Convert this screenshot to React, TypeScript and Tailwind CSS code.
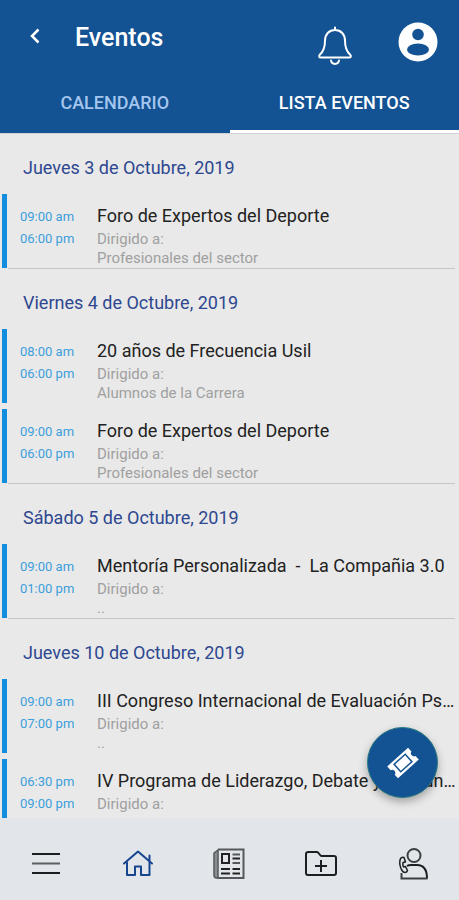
type EventItem = { start: string; end: string; title: string; audience: string };
type Day = { date: string; events: EventItem[] };

const days: Day[] = [
  {
    date: 'Jueves 3 de Octubre, 2019',
    events: [
      { start: '09:00 am', end: '06:00 pm', title: 'Foro de Expertos del Deporte', audience: 'Profesionales del sector' },
    ],
  },
  {
    date: 'Viernes 4 de Octubre, 2019',
    events: [
      { start: '08:00 am', end: '06:00 pm', title: '20 años de Frecuencia Usil', audience: 'Alumnos de la Carrera' },
      { start: '09:00 am', end: '06:00 pm', title: 'Foro de Expertos del Deporte', audience: 'Profesionales del sector' },
    ],
  },
  {
    date: 'Sábado 5 de Octubre, 2019',
    events: [
      { start: '09:00 am', end: '01:00 pm', title: 'Mentoría Personalizada  -  La Compañia 3.0', audience: '..' },
    ],
  },
  {
    date: 'Jueves 10 de Octubre, 2019',
    events: [
      { start: '09:00 am', end: '07:00 pm', title: 'III Congreso Internacional de Evaluación Psicológica', audience: '..' },
      { start: '06:30 pm', end: '09:00 pm', title: 'IV Programa de Liderazgo, Debate y Comunicación', audience: '..' },
    ],
  },
];

function BellIcon() {
  return (
    <svg width="36" height="40" viewBox="0 0 36 40" fill="none" stroke="currentColor" strokeWidth="2" strokeLinecap="round" strokeLinejoin="round">
      <path d="M18 1.500v2.500M18 4c-6 0-10 4.500-10 10.500 0 7-1.500 11-5 14-1.500 1.500-1 3 1 3h28c2 0 2.500-1.500 1-3-3.500-3-5-7-5-14C28 8.500 24 4 18 4z" />
      <path d="M14 34.500c.5 4.500 7.500 4.500 8 0" />
    </svg>
  );
}

function AccountIcon() {
  return (
    <svg width="40" height="40" viewBox="0 0 40 40">
      <circle cx="20" cy="20" r="19.500" fill="#fff" />
      <circle cx="20" cy="12.500" r="5.800" fill="#135293" />
      <ellipse cx="20" cy="27.500" rx="11" ry="6" fill="#135293" />
    </svg>
  );
}

function TicketIcon() {
  return (
    <svg width="36" height="36" viewBox="0 0 36 36">
      <g transform="rotate(-42 18 18)">
        <path d="M4 10h28v5a3.200 3.200 0 0 0 0 6.200V26H4v-4.800A3.200 3.200 0 0 0 4 15z" fill="#fff" />
        <rect x="10.500" y="13" width="15" height="10" fill="#fff" stroke="#135293" strokeWidth="1.500" />
      </g>
    </svg>
  );
}

function MenuIcon() {
  return (
    <svg width="32" height="32" viewBox="0 0 32 32" strokeWidth="2">
      <path d="M2 6h28M2 25h28" stroke="#1c1f21" />
      <path d="M2 15.500h28" stroke="#5c5f61" />
    </svg>
  );
}

function HomeIcon() {
  return (
    <svg width="32" height="32" viewBox="0 0 32 32" fill="none" stroke="#17458f" strokeWidth="2" strokeLinejoin="round" strokeLinecap="round">
      <path d="M2 15.500 16 3.500l14 12M27.500 12.500V7.500" />
      <path d="M5 14.500V27h8v-8.500h6V27h8.500V14.500" />
    </svg>
  );
}

function NewsIcon() {
  return (
    <svg width="34" height="34" viewBox="0 0 34 34" fill="none">
      <path d="M2 6l4-3v28H4.500Q2 31 2 28z" fill="#8b8e90" stroke="#55585a" strokeWidth="1.500" />
      <path d="M6 2.500h25.500v28.500H5.500" stroke="#55585a" strokeWidth="2" />
      <rect x="10" y="7" width="7" height="9" stroke="#222" strokeWidth="2" />
      <path d="M20.500 7.500H28M20.500 16H28" stroke="#55585a" strokeWidth="2" />
      <path d="M20.500 11.500H28M9 22h9M20.500 22H28M9 26.500h9M20.500 26.500H28" stroke="#222" strokeWidth="2" />
    </svg>
  );
}

function FolderIcon() {
  return (
    <svg width="34" height="34" viewBox="0 0 34 34" fill="none" stroke="#1c1f21" strokeWidth="2" strokeLinejoin="round">
      <path d="M4.500 5h8.500q1 0 1.500 1l2 2.500q.5.500 1.500.5h12q2 0 2 2v15q0 2-2 2h-26q-2 0-2-2V7q0-2 2.500-2z" />
      <path d="M17 13v12M11 19h12" />
    </svg>
  );
}

function ContactIcon() {
  return (
    <svg width="34" height="34" viewBox="0 0 34 34" fill="none" stroke="#1c1f21" strokeWidth="2">
      <circle cx="18" cy="8.500" r="6.500" stroke="#3c3f41" />
      <path d="M11 19q1.500-1 4-1h6q10 0 10 13.500" />
      <path d="M5.500 26v5.500H31.500" stroke="#3c3f41" />
      <path d="M8 10.500q-3-1-4 2.500-1 5.500 2 10.500c1.500 2.500 5 2.500 5.500 0l-2-4-2 .5q-1-2.500-.5-4.500l2.500-.5z" strokeWidth="1.500" strokeLinejoin="round" />
    </svg>
  );
}

const navItems = [
  { label: 'Menú', Icon: MenuIcon },
  { label: 'Inicio', Icon: HomeIcon },
  { label: 'Noticias', Icon: NewsIcon },
  { label: 'Carpetas', Icon: FolderIcon },
  { label: 'Contacto', Icon: ContactIcon },
];

function EventRow({ event }: { event: EventItem }) {
  return (
    <li className="flex h-[74px] border-l-[5px] border-[#138ede] pl-[13px]">
      <div className="w-[77px] shrink-0 pt-3 text-[13px] leading-[22px] text-[#3c9fdc]">
        <p>{event.start}</p>
        <p>{event.end}</p>
      </div>
      <div className="min-w-0 flex-1 pt-2 pr-0.5">
        <h3 className="overflow-hidden text-lg leading-7 text-ellipsis whitespace-pre text-[#222]">{event.title}</h3>
        <p className="text-[15px] leading-[19px] text-[#a0a0a0]">Dirigido a:</p>
        <p className="text-[15px] leading-[18px] text-[#a0a0a0]">{event.audience}</p>
      </div>
    </li>
  );
}

export default function App() {
  return (
    <div className="relative flex h-screen flex-col bg-[#e9e9e9] font-[Roboto,sans-serif]">
      <header className="shrink-0 bg-[#135293] text-white">
        <div className="flex h-[76px] items-start pr-[21px] pl-[23px]">
          <button aria-label="Volver" className="mt-6 flex h-6 w-6 items-center justify-center">
            <svg width="12" height="18" viewBox="0 0 12 18" fill="none" stroke="currentColor" strokeWidth="2.500">
              <path d="M9.500 2.500 3 9l6.500 6.500" />
            </svg>
          </button>
          <h1 className="mt-5 ml-7 flex-1 text-[25px] leading-9 font-medium">Eventos</h1>
          <button aria-label="Notificaciones" className="mt-[26px]"><BellIcon /></button>
          <button aria-label="Cuenta" className="mt-[22px] ml-[45px]"><AccountIcon /></button>
        </div>
        <div role="tablist" className="grid h-[57px] grid-cols-2 text-lg font-medium">
          <button role="tab" aria-selected="false" className="border-b-[3px] border-[#135293] text-[#a4c6ee]">CALENDARIO</button>
          <button role="tab" aria-selected="true" className="border-b-[3px] border-white">LISTA EVENTOS</button>
        </div>
      </header>

      <main className="min-h-0 flex-1 overflow-y-auto border-t border-[#cfd2d6] [scrollbar-width:none]">
        {days.map((day) => (
          <section key={day.date}>
            <h2 className="flex h-[60px] items-center pt-2 pl-[23px] text-lg text-[#2d4790]">{day.date}</h2>
            <ul className="flex flex-col gap-[6px] pl-0.5">
              {day.events.map((event) => (
                <EventRow key={event.start + event.title} event={event} />
              ))}
            </ul>
            <hr className="mr-1 ml-2 border-[#c6c6c6]" />
          </section>
        ))}
      </main>

      <button
        aria-label="Entradas"
        className="absolute right-[21px] bottom-[102px] flex h-[71px] w-[71px] items-center justify-center rounded-full border border-[#2a7a80] bg-[#135293] shadow-[0_4px_8px_rgba(0,0,0,0.3)]"
      >
        <TicketIcon />
      </button>

      <nav className="grid h-[82px] shrink-0 grid-cols-5 bg-[#e2e6ea] pt-[10px]">
        {navItems.map(({ label, Icon }) => (
          <button key={label} aria-label={label} className="flex items-center justify-center">
            <Icon />
          </button>
        ))}
      </nav>
    </div>
  );
}
